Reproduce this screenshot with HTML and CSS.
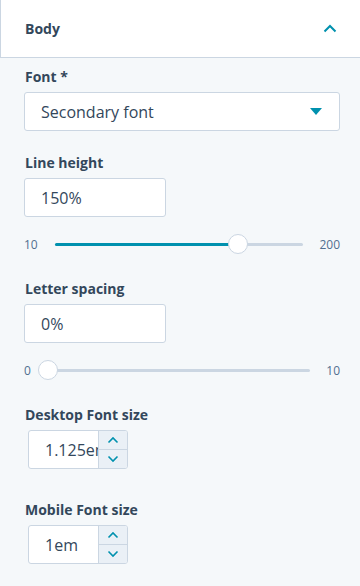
FILE: index.html
```html
<!DOCTYPE html>
<html>
<head>
<meta charset="utf-8">
<link rel="stylesheet" href="styles.css">
</head>
<body>
<div class="panel">
  <div class="header">
    <span class="title">Body</span>
    <svg class="chev" width="14" height="9" viewBox="0 0 14 9"><path d="M1.5 7.5 L7 2 L12.5 7.5" fill="none" stroke="#0091ae" stroke-width="2"/></svg>
  </div>
  <div class="content">
    <div class="field">
      <div class="label">Font *</div>
      <div class="select">
        <span>Secondary font</span>
        <svg class="caret" width="12" height="7" viewBox="0 0 12 7"><path d="M0 0 H12 L6 7 Z" fill="#0091ae"/></svg>
      </div>
    </div>
    <div class="field">
      <div class="label">Line height</div>
      <div class="input">150%</div>
      <div class="slider">
        <span class="min">10</span>
        <div class="track"><div class="fill" style="width:73.5%"></div><div class="thumb" style="left:73.5%"></div></div>
        <span class="max">200</span>
      </div>
    </div>
    <div class="field">
      <div class="label">Letter spacing</div>
      <div class="input">0%</div>
      <div class="slider">
        <span class="min">0</span>
        <div class="track"><div class="fill" style="width:0%"></div><div class="thumb" style="left:0%"></div></div>
        <span class="max">10</span>
      </div>
    </div>
    <div class="field">
      <div class="label">Desktop Font size</div>
      <div class="number">
        <div class="numval">1.125em</div>
        <div class="spin">
          <div class="btn"><svg width="12" height="8" viewBox="0 0 12 8"><path d="M1.5 6.5 L6 2 L10.5 6.5" fill="none" stroke="#0091ae" stroke-width="1.6"/></svg></div>
          <div class="btn"><svg width="12" height="8" viewBox="0 0 12 8"><path d="M1.5 1.5 L6 6 L10.5 1.5" fill="none" stroke="#0091ae" stroke-width="1.6"/></svg></div>
        </div>
      </div>
    </div>
    <div class="field">
      <div class="label">Mobile Font size</div>
      <div class="number">
        <div class="numval">1em</div>
        <div class="spin">
          <div class="btn"><svg width="12" height="8" viewBox="0 0 12 8"><path d="M1.5 6.5 L6 2 L10.5 6.5" fill="none" stroke="#0091ae" stroke-width="1.6"/></svg></div>
          <div class="btn"><svg width="12" height="8" viewBox="0 0 12 8"><path d="M1.5 1.5 L6 6 L10.5 1.5" fill="none" stroke="#0091ae" stroke-width="1.6"/></svg></div>
        </div>
      </div>
    </div>
  </div>
</div>
</body>
</html>
```

FILE: styles.css
```css
* { box-sizing: border-box; }
html, body { margin: 0; padding: 0; }
body {
  background: #f5f8fa;
  font-family: "Open Sans", "Liberation Sans", sans-serif;
  color: #33475b;
  width: 360px;
  height: 586px;
  overflow: hidden;
}
.header {
  height: 58px;
  background: #fff;
  border-left: 1px solid #cbd6e2;
  border-bottom: 1px solid #cbd6e2;
  display: flex;
  align-items: center;
  justify-content: space-between;
  padding: 0 23px 0 24px;
}
.title { font-size: 14px; font-weight: 700; margin-top: -1px; }
.chev { margin-top: -1px; }
.content {
  padding: 8px 20px 0 24px;
  display: flex;
  flex-direction: column;
}
.field { display: flex; flex-direction: column; }
.label {
  font-size: 14px;
  font-weight: 700;
  line-height: 20px;
  padding: 1px 0 0 1px;
  margin-bottom: 5px;
}
.select {
  width: 316px;
  height: 39px;
  background: #fff;
  border: 1px solid #cbd6e2;
  border-radius: 3px;
  display: flex;
  align-items: center;
  justify-content: space-between;
  padding: 0 17px 0 16px;
  font-size: 16px;
  margin-bottom: 21px;
}
.input {
  width: 142px;
  height: 39px;
  background: #fff;
  border: 1px solid #cbd6e2;
  border-radius: 3px;
  display: flex;
  align-items: center;
  padding-left: 16px;
  font-size: 16px;
}
.slider {
  display: flex;
  align-items: center;
  height: 20px;
  margin: 17px 0 24px;
  font-size: 12px;
  color: #516f90;
}
.slider .min { margin-right: 17px; }
.slider .max { margin-left: 16px; }
.track {
  flex: 1;
  height: 3px;
  background: #cbd6e2;
  border-radius: 2px;
  position: relative;
}
.fill { height: 3px; background: #0091ae; border-radius: 2px; }
.thumb {
  position: absolute;
  top: 50%;
  width: 20px;
  height: 20px;
  margin: -10px 0 0 -10px;
  border-radius: 50%;
  background: #fff;
  border: 1px solid #cbd6e2;
}
.number {
  margin-left: 4px;
  width: 100px;
  height: 39px;
  display: flex;
  border: 1px solid #cbd6e2;
  border-radius: 3px;
  background: #fff;
  overflow: hidden;
  margin-bottom: 30px;
}
.numval {
  width: 69px;
  font-size: 16px;
  padding-left: 16px;
  display: flex;
  align-items: center;
  white-space: nowrap;
  overflow: hidden;
}
.spin {
  flex: 1;
  display: flex;
  flex-direction: column;
  border-left: 1px solid #cbd6e2;
  background: #eaf0f6;
}
.btn {
  flex: 1;
  display: flex;
  align-items: center;
  justify-content: center;
}
.btn + .btn { border-top: 1px solid #cbd6e2; }
```
